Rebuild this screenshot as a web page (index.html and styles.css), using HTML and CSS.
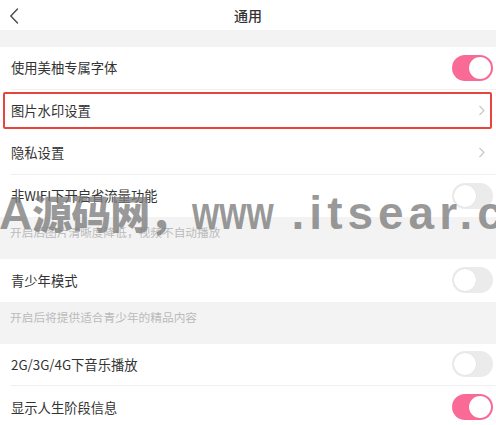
FILE: index.html
```html
<!DOCTYPE html>
<html lang="zh-CN">
<head>
<meta charset="utf-8">
<title>通用</title>
<link rel="stylesheet" href="styles.css">
</head>
<body>
<div class="page">
  <header class="header">
    <span class="back">
      <svg width="10" height="16" viewBox="0 0 10 16"><path d="M8.5 1 L1.8 8 L8.5 15" fill="none" stroke="#4a4a4a" stroke-width="1.4" stroke-linecap="round" stroke-linejoin="round"/></svg>
    </span>
    <h1 class="title">通用</h1>
    <span></span>
  </header>
  <div class="band"></div>

  <div class="row">
    <div class="row-inner line">
      <span class="label">使用美柚专属字体</span>
      <span class="toggle on"><span class="knob"></span></span>
    </div>
  </div>
  <div class="row">
    <div class="row-inner">
      <span class="label">图片水印设置</span>
      <svg class="chev" width="8" height="11" viewBox="0 0 8 11"><path d="M1.5 1 L6 5.5 L1.5 10" fill="none" stroke="#c6c6c6" stroke-width="1.1"/></svg>
    </div>
    <div class="highlight"></div>
  </div>
  <div class="row">
    <div class="row-inner line">
      <span class="label">隐私设置</span>
      <svg class="chev" width="8" height="11" viewBox="0 0 8 11"><path d="M1.5 1 L6 5.5 L1.5 10" fill="none" stroke="#c6c6c6" stroke-width="1.1"/></svg>
    </div>
  </div>
  <div class="row">
    <div class="row-inner">
      <span class="label">非WIFI下开启省流量功能</span>
      <span class="toggle"><span class="knob"></span></span>
    </div>
  </div>
  <div class="hint">开启后图片清晰度降低，视频不自动播放</div>

  <div class="row">
    <div class="row-inner">
      <span class="label">青少年模式</span>
      <span class="toggle"><span class="knob"></span></span>
    </div>
  </div>
  <div class="hint">开启后将提供适合青少年的精品内容</div>

  <div class="row">
    <div class="row-inner line">
      <span class="label">2G/3G/4G下音乐播放</span>
      <span class="toggle"><span class="knob"></span></span>
    </div>
  </div>
  <div class="row">
    <div class="row-inner">
      <span class="label">显示人生阶段信息</span>
      <span class="toggle on"><span class="knob"></span></span>
    </div>
  </div>

  <div class="watermark"><span class="wm-a">A</span><span class="wm-cjk">源码网，</span><span class="wm-www">www</span><span class="wm-url">.itsear.co</span></div>
</div>
</body>
</html>
```

FILE: styles.css
```css
html, body {
  margin: 0;
  padding: 0;
  background: #ffffff;
}
body {
  font-family: "Noto Sans CJK SC", "Noto Sans", sans-serif;
  color: #333333;
  overflow: hidden;
}
.page {
  position: relative;
  width: 496px;
  height: 425px;
  overflow: hidden;
}
.header {
  height: 30px;
  display: grid;
  grid-template-columns: 40px 1fr 40px;
  align-items: center;
}
.back {
  display: flex;
  align-items: center;
  padding-left: 9px;
  padding-top: 1px;
}
.title {
  margin: 0;
  text-align: center;
  font-size: 14px;
  font-weight: 500;
  color: #333333;
  line-height: 26px;
}
.band {
  height: 17px;
  background: #f3f3f3;
}
.row {
  position: relative;
  height: 42.5px;
  padding-left: 11px;
  display: flex;
}
.row-inner {
  flex: 1;
  display: flex;
  align-items: center;
  justify-content: space-between;
  padding-right: 3px;
}
.row-inner.line {
  border-bottom: 1px solid #f0f0f0;
}
.label {
  font-size: 13.3px;
  color: #333333;
  line-height: 20px;
  padding-top: 1px;
}
.chev {
  margin-right: 7px;
}
.toggle {
  width: 41px;
  height: 26px;
  border-radius: 13px;
  background: #ebebeb;
  display: flex;
  align-items: center;
  padding: 0 2px;
  box-sizing: border-box;
}
.toggle .knob {
  width: 22px;
  height: 22px;
  border-radius: 50%;
  background: #ffffff;
  box-shadow: 0 0 1px rgba(0, 0, 0, 0.15);
}
.toggle.on {
  background: #fa6a96;
  justify-content: flex-end;
}
.hint {
  height: 42px;
  background: #f3f3f3;
  font-size: 11.7px;
  color: #bbbbbb;
  padding-left: 10px;
  padding-top: 6px;
  box-sizing: border-box;
  line-height: 18px;
}
.highlight {
  position: absolute;
  left: 3px;
  right: 4px;
  top: 2px;
  bottom: 3px;
  border: 2px solid #e8443b;
  border-radius: 2px;
}
.watermark {
  position: absolute;
  left: -1px;
  top: 183px;
  white-space: nowrap;
  color: rgba(125, 125, 125, 0.78);
  font-weight: 700;
  display: flex;
  align-items: baseline;
  pointer-events: none;
}
.wm-a {
  font-family: "Liberation Sans", sans-serif;
  font-size: 46px;
}
.wm-cjk {
  font-family: "Noto Sans CJK SC", sans-serif;
  font-size: 40px;
  font-weight: 900;
  letter-spacing: -1px;
}
.wm-www {
  display: inline-block;
  font-family: "Liberation Sans", sans-serif;
  font-size: 46px;
  transform: scaleX(0.76);
  transform-origin: left center;
  margin-left: 4px;
  margin-right: -26px;
}
.wm-url {
  font-family: "Liberation Sans", sans-serif;
  font-size: 46px;
  letter-spacing: 5px;
  margin-left: 18px;
}
```
